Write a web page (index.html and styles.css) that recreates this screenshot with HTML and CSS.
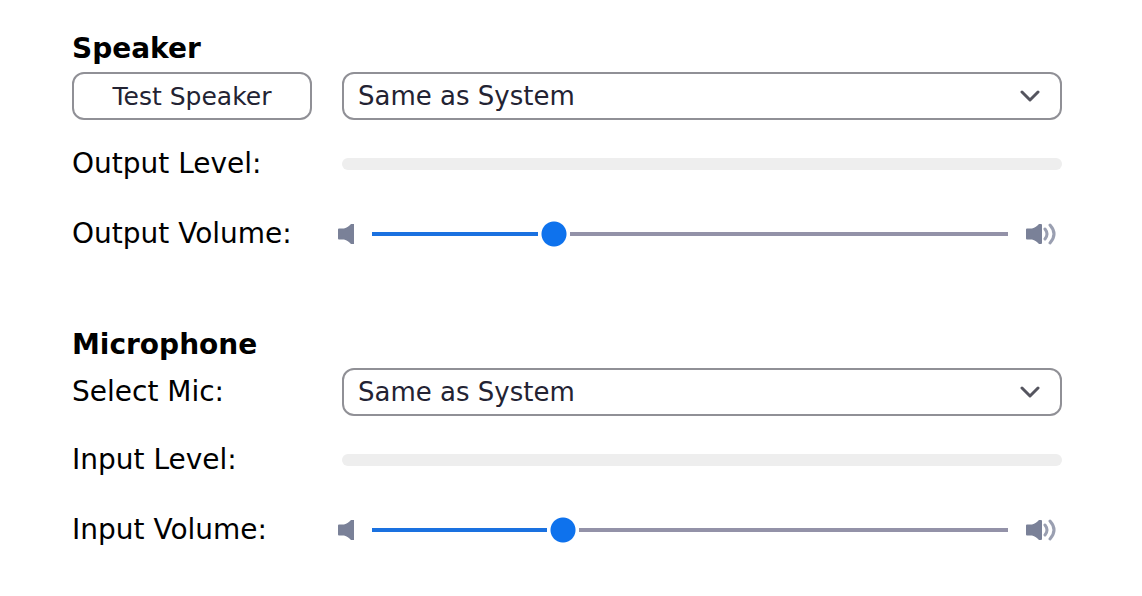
FILE: index.html
```html
<!DOCTYPE html>
<html lang="en">
<head>
    <meta charset="UTF-8">
    <meta name="viewport" content="width=device-width, initial-scale=1.0">
    <title>Audio Settings</title>
    <link rel="stylesheet" href="styles.css">
</head>
<body>
    <!-- Shared icons -->
    <svg class="icon-defs" aria-hidden="true">
        <symbol id="icon-low" viewBox="0 0 16 22">
            <path d="M1 5.500h5c3-.5 5-2.500 7-4.500h3v20h-3c-2-2-4-4-7-4.500H1q-1 0-1-1v-9q0-1 1-1z" fill="#7a8198"/>
        </symbol>
        <symbol id="icon-high" viewBox="0 0 30 22">
            <path d="M1 5.500h5c3-.5 5-2.500 7-4.500h2q1 0 1 1v18q0 1-1 1h-2c-2-2-4-4-7-4.500H1q-1 0-1-1v-9q0-1 1-1z" fill="#7a8198"/>
            <path d="M19 6q4 5 0 10M24 2q8 9 0 18" fill="none" stroke="#9a9fb1" stroke-width="3" stroke-linecap="round"/>
        </symbol>
        <symbol id="icon-chevron" viewBox="0 0 20 12">
            <path d="M2 2l8 8 8-8" fill="none" stroke="#55555f" stroke-width="3" stroke-linecap="round" stroke-linejoin="round"/>
        </symbol>
    </svg>

    <main>
        <!-- Speaker Section -->
        <section>
            <h2>Speaker</h2>
            <div class="row">
                <button type="button" class="test-button">Test Speaker</button>
                <div class="select-box">
                    <select aria-label="Speaker">
                        <option>Same as System</option>
                    </select>
                    <svg class="chevron"><use href="#icon-chevron"/></svg>
                </div>
            </div>
            <div class="row level-row">
                <span id="output-level">Output Level:</span>
                <div class="level" role="meter" aria-labelledby="output-level" aria-valuenow="0"></div>
            </div>
            <div class="row volume-row">
                <label for="output-volume">Output Volume:</label>
                <div class="volume">
                    <svg class="icon-low"><use href="#icon-low"/></svg>
                    <input type="range" id="output-volume" min="0" max="255" value="70" style="--fill: 27.45%">
                    <svg class="icon-high"><use href="#icon-high"/></svg>
                </div>
            </div>
        </section>

        <!-- Microphone Section -->
        <section>
            <h2>Microphone</h2>
            <div class="row">
                <label for="mic">Select Mic:</label>
                <div class="select-box">
                    <select id="mic">
                        <option>Same as System</option>
                    </select>
                    <svg class="chevron"><use href="#icon-chevron"/></svg>
                </div>
            </div>
            <div class="row level-row">
                <span id="input-level">Input Level:</span>
                <div class="level" role="meter" aria-labelledby="input-level" aria-valuenow="0"></div>
            </div>
            <div class="row volume-row">
                <label for="input-volume">Input Volume:</label>
                <div class="volume">
                    <svg class="icon-low"><use href="#icon-low"/></svg>
                    <input type="range" id="input-volume" min="0" max="255" value="74" style="--fill: 29.02%">
                    <svg class="icon-high"><use href="#icon-high"/></svg>
                </div>
            </div>
        </section>
    </main>

    <script>
        // Keep the coloured part of each slider in step with its value
        document.querySelectorAll('input[type="range"]').forEach(slider => {
            slider.addEventListener('input', () => {
                slider.style.setProperty('--fill', `${slider.value / slider.max * 100}%`);
            });
        });
    </script>
</body>
</html>
```
FILE: styles.css
```css
/* Global Styles */
* {
    box-sizing: border-box;
}

body {
    margin: 0;
    background-color: #fff;
    color: #000;
    font-family: 'DejaVu Sans', sans-serif;
    font-size: 28px;
    line-height: 48px;
}

main {
    display: flex;
    flex-direction: column;
    gap: 62px;
    padding: 24px 80px 24px 72px;
}

.icon-defs {
    display: none;
}

h2 {
    margin: 0;
    padding-top: 2px;
    font-size: 28px;
    font-weight: bold;
    line-height: 46px;
}

/* Rows */
.row {
    display: grid;
    grid-template-columns: 240px 1fr;
    gap: 30px;
    align-items: center;
    white-space: nowrap;
}

.level-row {
    margin-top: 20px;
}

.volume-row {
    gap: 26px;
    margin-top: 22px;
    padding-right: 6px;
}

/* Button and Drop-downs */
.test-button,
select {
    width: 100%;
    height: 48px;
    border: 2px solid #909096;
    border-radius: 12px;
    background-color: #fff;
    color: #232333;
    font-family: inherit;
    cursor: pointer;
}

.test-button {
    padding: 0;
    font-size: 25px;
}

.select-box {
    display: flex;
    position: relative;
}

select {
    appearance: none;
    padding: 0 56px 0 14px;
    font-size: 26px;
}

.chevron {
    position: absolute;
    top: 18px;
    right: 22px;
    width: 20px;
    height: 12px;
    pointer-events: none;
}

/* Level Meter */
.level {
    height: 12px;
    border-radius: 6px;
    background-color: #eee;
}

/* Volume Slider */
.volume {
    display: flex;
    align-items: center;
    gap: 18px;
}

.icon-low,
.icon-high {
    flex: none;
    width: 16px;
    height: 22px;
}

.icon-high {
    width: 30px;
}

input[type="range"] {
    appearance: none;
    flex: 1;
    min-width: 0;
    height: 32px;
    margin: 0;
    background: none;
    cursor: pointer;
}

input[type="range"]::-webkit-slider-runnable-track {
    height: 4px;
    background: linear-gradient(to right, #1a71e0 var(--fill), #9392a8 var(--fill));
}

input[type="range"]::-webkit-slider-thumb {
    appearance: none;
    width: 32px;
    height: 32px;
    margin-top: -14px;
    background: radial-gradient(circle, #0e72ed 12px, #fff 13px);
}
```
